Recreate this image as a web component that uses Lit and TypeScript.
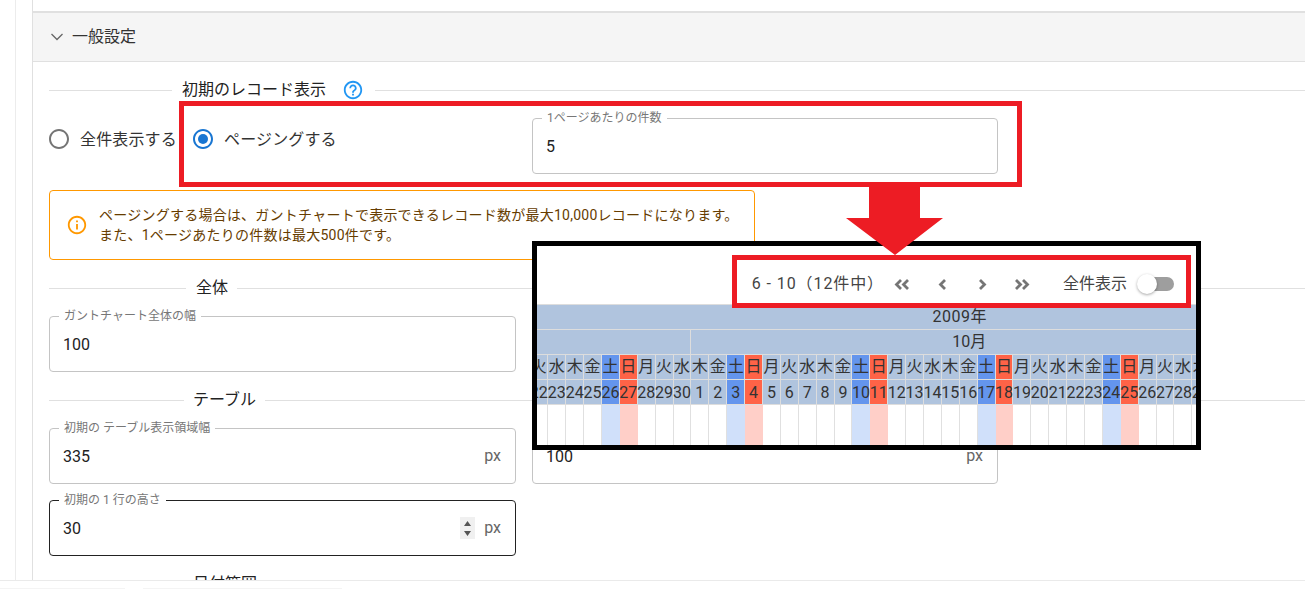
import { LitElement, html, css, svg } from "lit";
import { customElement } from "lit/decorators.js";
import { classMap } from "lit/directives/class-map.js";

const WEEK = ["日", "月", "火", "水", "木", "金", "土"];
const DAYS = Array.from({ length: 48 }, (_, i) => {
  const d = new Date(2009, 8, 22 + i);
  return { n: d.getDate(), w: d.getDay() };
});

const P_HELP = "M11 18h2v-2h-2v2zm1-16C6.48 2 2 6.48 2 12s4.48 10 10 10 10-4.48 10-10S17.52 2 12 2zm0 18c-4.41 0-8-3.59-8-8s3.59-8 8-8 8 3.59 8 8-3.59 8-8 8zm0-14c-2.21 0-4 1.79-4 4h2c0-1.1.9-2 2-2s2 .9 2 2c0 2-3 1.75-3 5h2c0-2.25 3-2.5 3-5 0-2.21-1.79-4-4-4z";
const P_INFO = "M11 7h2v2h-2zm0 4h2v6h-2zm1-9C6.48 2 2 6.48 2 12s4.48 10 10 10 10-4.48 10-10S17.52 2 12 2zm0 18c-4.41 0-8-3.59-8-8s3.59-8 8-8 8 3.59 8 8-3.59 8-8 8z";
const P_RING = "M12 2C6.48 2 2 6.48 2 12s4.48 10 10 10 10-4.48 10-10S17.52 2 12 2zm0 18c-4.42 0-8-3.58-8-8s3.58-8 8-8 8 3.58 8 8-3.58 8-8 8z";

@customElement("app-root")
export class AppRoot extends LitElement {
  static styles = css`
    :host {
      display: block;
      position: relative;
      height: 589px;
      overflow: hidden;
      background: #fff;
      font-family: Roboto, "Noto Sans CJK JP", sans-serif;
      font-size: 16px;
      color: #222;
    }
    .rail { height: 589px; margin-left: 15px; padding-left: 16px; border-left: 1px solid #ececec; box-sizing: border-box; }
    .panel { height: 589px; padding-top: 11px; border-left: 1px solid #e0e0e0; box-sizing: border-box; }
    .acc-head {
      display: flex; align-items: center; gap: 8px; height: 51px; box-sizing: border-box;
      padding: 0 0 3px 17px; background: #f5f5f5; color: #333; font-size: 16px;
      border-top: 2px solid #e0e0e0; border-bottom: 1px solid #e0e0e0;
    }
    .acc-head svg { display: block; margin-top: 3px; }
    .acc-head span { margin-bottom: 1px; }
    .body { padding-left: 16px; }
    .divider { display: flex; align-items: center; height: 24px; margin-top: 16px; color: #222; white-space: nowrap; }
    .divider span { margin-bottom: 4px; }
    .divider::before, .divider::after { content: ""; height: 1px; background: #e0e0e0; }
    .divider::after { flex: 1; }
    .d-rec::before { width: 123px; margin-right: 10px; }
    .d-rec::after { margin-left: 11px; }
    .d-all::before { width: 137px; margin-right: 10px; }
    .d-all::after { margin-left: 9px; }
    .d-tbl::before { width: 135px; margin-right: 9px; }
    .d-tbl::after { margin-left: 9px; }
    .help { margin-left: 16px; display: block; }
    .records { display: flex; margin-top: 16px; }
    .radio { display: flex; align-items: center; gap: 9px; height: 42px; font-size: 16px; color: #333; white-space: nowrap; letter-spacing: .15px; }
    .radio span { margin-bottom: 3px; }
    .radio svg { display: block; margin-left: -2px; }
    .r-all { width: 144px; }
    .r-page { width: 339px; }
    .grid2 { display: grid; grid-template-columns: 467px 466px; column-gap: 16px; margin-top: 16px; }
    .records .field { width: 466px; }
    .field {
      position: relative; display: flex; align-items: center; justify-content: space-between;
      height: 56px; box-sizing: border-box; padding: 0 14px 0 13px;
      border: 1px solid #c4c4c4; border-radius: 4px; font-size: 16px; color: #222;
    }
    .field.focus { border-color: #222; }
    .field label {
      position: absolute; left: 9px; top: -9px; padding: 0 5px; background: #fff;
      font-size: 12px; line-height: 16px; color: #777; white-space: nowrap;
    }
    .unit { color: #666; margin-bottom: 2px; }
    .end { display: flex; align-items: center; gap: 9px; }
    .spin { display: block; }
    .single { width: 467px; }
    .gap16 { margin-top: 16px; }
    .alert {
      display: flex; align-items: center; gap: 11px; width: 706px; height: 70px; box-sizing: border-box;
      margin-top: 16px; padding-left: 16px; border: 1px solid #ff9800; border-radius: 4px;
      color: #663c00; font-size: 14px; line-height: 20px; white-space: nowrap; letter-spacing: .24px;
    }
    .alert svg { display: block; flex: none; }
    .foot {
      position: absolute; left: 0; right: 0; top: 580px; height: 9px;
      display: flex; align-items: flex-end; gap: 18px;
      background: #fff; border-top: 1px solid #eaeaea; box-sizing: border-box;
    }
    .ghost { height: 1px; background: #f4f4f4; }
    .g1 { width: 125px; }
    .g2 { width: 199px; }
    .frame {
      position: absolute; left: 532px; top: 241px; width: 669px; height: 209px; box-sizing: border-box;
      border: 5px solid #000; background: #fff; overflow: hidden;
    }
    .bar {
      display: flex; justify-content: flex-end; align-items: center; height: 59px; box-sizing: border-box;
      padding: 17px 22px 0 0; color: #444; border-bottom: 1px solid #ddd; white-space: nowrap;
    }
    .range { margin: 0 -2px 3px 0; letter-spacing: .9px; }
    .all { margin-bottom: 3px; }
    .pg { display: flex; margin-right: 21px; }
    .pg svg { display: block; }
    .switch { position: relative; width: 36px; height: 14px; margin-left: 11px; border-radius: 7px; background: #9e9e9e; }
    .thumb {
      position: absolute; left: -1px; top: -3px; width: 20px; height: 20px; border-radius: 50%;
      background: #fff; box-shadow: 0 1px 3px rgba(0,0,0,.35);
    }
    .gantt { margin-left: -6.6px; width: 859.2px; display: grid; grid-template-columns: repeat(48, 17.9px); grid-auto-rows: 25px; color: #333; }
    .c {
      display: flex; align-items: center; justify-content: center; box-sizing: border-box; min-width: 0;
      background: #b0c4de; border-right: 1px solid #ddd; border-bottom: 1px solid #ddd; white-space: nowrap;
    }
    .c.cjk { padding-bottom: 4px; }
    .year { grid-column: 1 / -1; border-right: 0; letter-spacing: .5px; }
    .sep { grid-column: span 9; }
    .oct { grid-column: span 31; padding-left: 2px; }
    .nov { grid-column: span 8; border-right: 0; }
    .c.sat { background: #6495ed; }
    .c.sun { background: #ff6347; }
    .b { height: 40px; box-sizing: border-box; border-right: 1px solid #e0e0e0; background: #fff; }
    .b.sat { background: #d0e0fa; border-right-color: #d0e0fa; }
    .b.sun { background: #ffcfc8; border-right-color: #ffcfc8; }
    .mark { position: absolute; box-sizing: border-box; border: 5px solid #ed1c24; pointer-events: none; }
    .m1 { left: 179px; top: 101px; width: 843px; height: 86px; }
    .m2 { left: 732px; top: 255px; width: 459px; height: 53px; }
    .arrow { position: absolute; left: 846px; top: 187px; display: block; }
  `;

  private icon(d: string, size: number, color: string) {
    return html`<svg width=${size} height=${size} viewBox="0 0 24 24" fill=${color}><path d=${d}></path></svg>`;
  }

  private chev(points: string[]) {
    return html`<svg width="40" height="24" viewBox="0 0 40 24" fill="none" stroke="#757575" stroke-width="2.8">
      ${points.map((p) => svg`<polyline points=${p}></polyline>`)}
    </svg>`;
  }

  render() {
    return html`
      <div class="rail"><div class="panel">
        <div class="acc-head">
          <svg width="14" height="14" viewBox="0 0 14 14" fill="none" stroke="#666" stroke-width="1.3"><polyline points="1.5,4 7,9.5 12.5,4"></polyline></svg>
          <span>一般設定</span>
        </div>
        <div class="body">
          <div class="divider d-rec"><span>初期のレコード表示</span><svg class="help" width="22" height="22" viewBox="0 0 24 24" fill="#2196f3"><path d=${P_HELP}></path></svg></div>
          <div class="records">
            <div class="radio r-all">${this.icon(P_RING, 24, "#757575")}<span>全件表示する</span></div>
            <div class="radio r-page">
              <svg width="24" height="24" viewBox="0 0 24 24" fill="#1976d2"><path d=${P_RING}></path><circle cx="12" cy="12" r="5"></circle></svg>
              <span>ページングする</span>
            </div>
            <div class="field"><label>1ページあたりの件数</label><span>5</span></div>
          </div>
          <div class="alert">
            ${this.icon(P_INFO, 22, "#ff9800")}
            <div>ページングする場合は、ガントチャートで表示できるレコード数が最大10,000レコードになります。<br />また、1ページあたりの件数は最大500件です。</div>
          </div>
          <div class="divider d-all"><span>全体</span></div>
          <div class="field single gap16"><label>ガントチャート全体の幅</label><span>100</span></div>
          <div class="divider d-tbl"><span>テーブル</span></div>
          <div class="grid2">
            <div class="field"><label>初期の テーブル表示領域幅</label><span>335</span><span class="unit">px</span></div>
            <div class="field"><label>ガントチャート表示領域幅</label><span>100</span><span class="unit">px</span></div>
          </div>
          <div class="field single focus gap16">
            <label>初期の 1 行の高さ</label><span>30</span>
            <span class="end">
              <svg class="spin" width="15" height="22" viewBox="0 0 15 22"><rect width="15" height="22" fill="#f0f0f0"></rect><path d="M7.5 4l3.5 5h-7zM7.5 19l3.5-5h-7z" fill="#555"></path></svg>
              <span class="unit">px</span>
            </span>
          </div>
          <div class="divider d-tbl"><span>日付範囲</span></div>
        </div>
      </div></div>

      <div class="foot"><div class="ghost g1"></div><div class="ghost g2"></div></div>

      <div class="frame">
        <div class="bar">
          <span class="range">6 - 10（12件中）</span>
          <span class="pg">
            ${this.chev(["19,8 14.5,12.5 19,17", "26,8 21.5,12.5 26,17"])}
            ${this.chev(["23,8 18.5,12.5 23,17"])}
            ${this.chev(["18,8 22.5,12.5 18,17"])}
            ${this.chev(["14,8 18.5,12.5 14,17", "21,8 25.5,12.5 21,17"])}
          </span>
          <span class="all">全件表示</span>
          <span class="switch"><span class="thumb"></span></span>
        </div>
        <div class="gantt">
          <div class="c cjk year">2009年</div>
          <div class="c sep"></div>
          <div class="c cjk oct">10月</div>
          <div class="c nov"></div>
          ${DAYS.map((d) => html`<div class=${classMap({ c: true, cjk: true, sat: d.w === 6, sun: d.w === 0 })}>${WEEK[d.w]}</div>`)}
          ${DAYS.map((d) => html`<div class=${classMap({ c: true, sat: d.w === 6, sun: d.w === 0 })}>${d.n}</div>`)}
          ${DAYS.map((d) => html`<div class=${classMap({ b: true, sat: d.w === 6, sun: d.w === 0 })}></div>`)}
        </div>
      </div>

      <svg class="arrow" width="98" height="68" viewBox="0 0 98 68" fill="#ed1c24"><path d="M23 0h51v31h23L49 68 0 31h23z"></path></svg>
      <div class="mark m1"></div>
      <div class="mark m2"></div>
    `;
  }
}
